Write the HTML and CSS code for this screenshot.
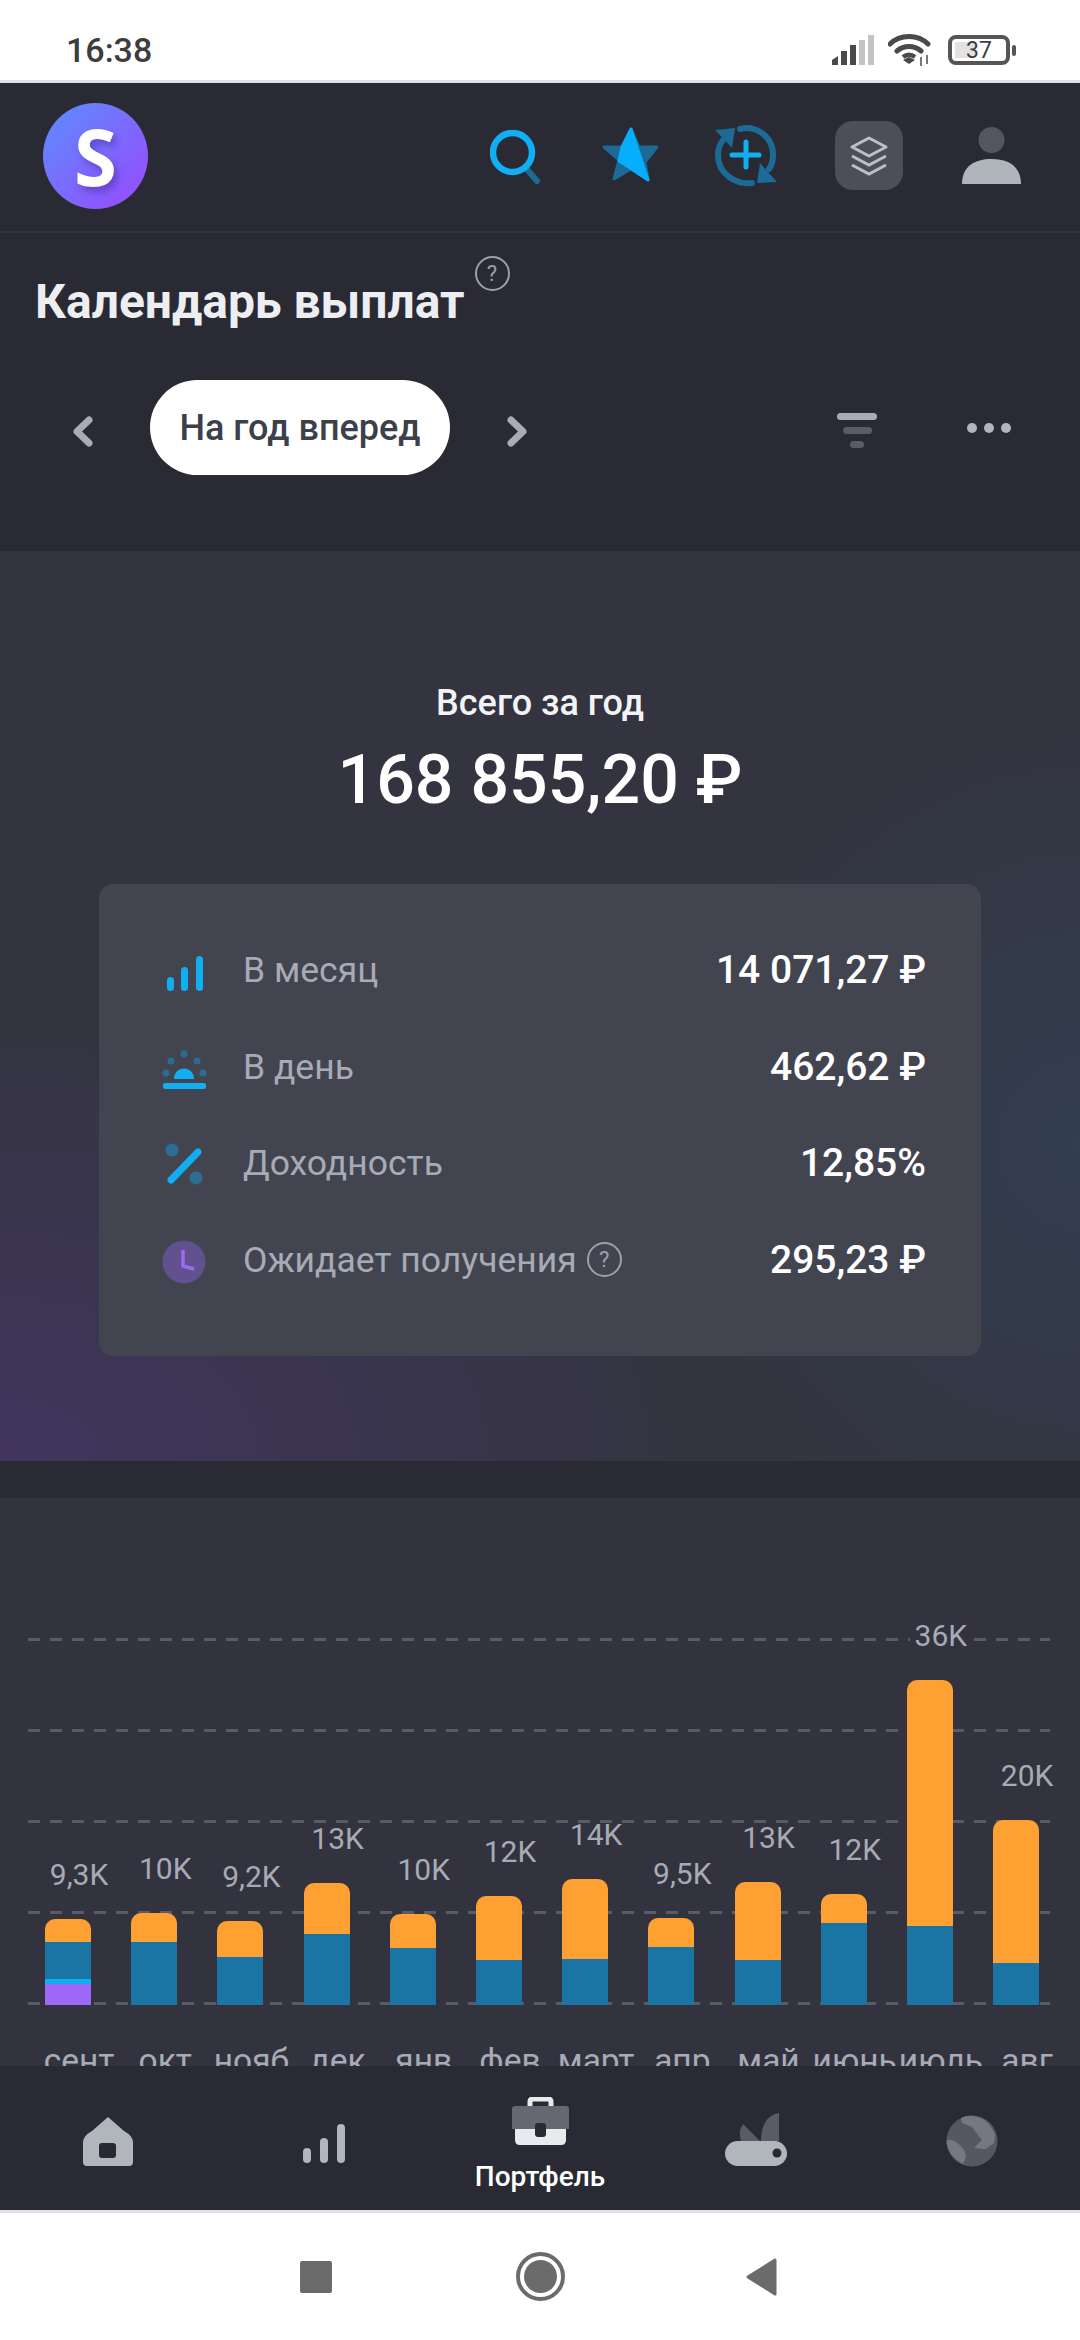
FILE: index.html
```html
<!DOCTYPE html>
<html lang="ru">
<head>
  <meta charset="UTF-8">
  <title>Календарь выплат</title>
  <meta name="viewport" content="width=device-width, initial-scale=1.0">
  <link rel="stylesheet" href="styles.css">
</head>
<body>
  <div class="status-bar">
    <span class="status-time">16:38</span>
    <div class="status-icons">
      <svg width="42" height="30" viewBox="0 0 42 30">
        <path d="M0 30v-5l6-4v9z" fill="#4a4a4a"/>
        <rect x="9" y="16" width="6" height="14" fill="#4a4a4a"/>
        <rect x="18" y="10" width="6" height="20" fill="#4a4a4a"/>
        <rect x="27" y="5" width="6" height="25" fill="#c4c4c4"/>
        <rect x="36" y="0" width="6" height="30" fill="#c4c4c4"/>
      </svg>
      <svg width="44" height="32" viewBox="0 0 44 32">
        <path d="M2 10C12 0 30 0 40 10M9 17c7-6 17-6 24 0" fill="none" stroke="#4a4a4a" stroke-width="5" stroke-linecap="round"/>
        <path d="M15 23c4-3 8-3 12 0" fill="none" stroke="#4a4a4a" stroke-width="4.5"/>
        <path d="M15 26l6-3 6 3-6 4z" fill="#4a4a4a"/>
        <path d="M33 23v9M39 21v9" stroke="#777" stroke-width="2"/>
      </svg>
      <div class="battery">
        <span class="battery-level"></span>
        <span class="battery-text">37</span>
      </div>
      <span class="battery-nub"></span>
    </div>
  </div>

  <header class="top-bar">
    <div class="logo">S</div>
    <div class="top-icons">
      <svg class="icon-search" width="51" height="54" viewBox="0 0 51 54">
        <path d="M35 37l12 14" stroke="#1d6a94" stroke-width="6" stroke-linecap="round"/>
        <circle cx="22.500" cy="22.500" r="19.500" fill="none" stroke="#12aef2" stroke-width="6.500"/>
      </svg>
      <svg class="icon-star" width="57" height="55" viewBox="0 0 57 55">
        <path d="M29 2l8 18h18l-12 15 3 17-17-10-17 10 5-19L2 20h19z" fill="#1c6a96" stroke="#1c6a96" stroke-width="3" stroke-linejoin="round"/>
        <path d="M29 2l17 51-18-12-11-7 3-14z" fill="#07aefc" stroke="#07aefc" stroke-width="3" stroke-linejoin="round"/>
      </svg>
      <svg class="icon-refresh" width="64" height="64" viewBox="0 0 64 64">
        <path d="M26 6c14-4 33 6 33 26 0 5-1 10-4 14M38 60C22 62 4 51 4 32c0-6 2-11 5-15" fill="none" stroke="#1c6a96" stroke-width="6" stroke-linecap="round"/>
        <path d="M1 7l20-2-3 20zM63 59l-20 1 3-20z" fill="#1c6a96"/>
        <path d="M32 19v25M18 32h27" stroke="#12aef2" stroke-width="5" stroke-linecap="round"/>
      </svg>
      <div class="layers-btn">
        <svg width="68" height="69" viewBox="0 0 68 69">
          <path d="M34 17l17 9-17 9-17-9z" fill="none" stroke="#bcbfc8" stroke-width="3" stroke-linejoin="round"/>
          <path d="M17 35l17 9 17-9M17 44l17 9 17-9" fill="none" stroke="#bcbfc8" stroke-width="3"/>
        </svg>
      </div>
      <svg class="icon-person" width="59" height="57" viewBox="0 0 59 57">
        <ellipse cx="29.500" cy="13" rx="13" ry="13" fill="#55565f"/>
        <path d="M0 57c0-18 13-25 29.500-25S59 39 59 57z" fill="#b0b5bc"/>
      </svg>
    </div>
  </header>

  <section class="title-area">
    <div class="title-row">
      <h1>Календарь выплат</h1>
      <span class="help help-big">?</span>
    </div>
    <div class="period-row">
      <svg class="chevron" width="21" height="31" viewBox="0 0 21 31">
        <path d="M17 4L5 15.500 17 27" fill="none" stroke="#a8adb5" stroke-width="7" stroke-linecap="round" stroke-linejoin="round"/>
      </svg>
      <div class="period-pill">На год вперед</div>
      <svg class="chevron" width="21" height="31" viewBox="0 0 21 31">
        <path d="M4 4l12 11.500L4 27" fill="none" stroke="#a8adb5" stroke-width="7" stroke-linecap="round" stroke-linejoin="round"/>
      </svg>
      <div class="period-actions">
        <div class="filter-icon">
          <span class="filter-a"></span>
          <span class="filter-b"></span>
          <span class="filter-c"></span>
        </div>
        <div class="dots-icon">
          <span></span><span></span><span></span>
        </div>
      </div>
    </div>
  </section>

  <section class="summary">
    <div class="summary-caption">Всего за год</div>
    <div class="summary-total">168 855,20 ₽</div>
    <div class="summary-card">
      <div class="summary-row">
        <svg class="row-icon" width="48" height="48" viewBox="0 0 48 48">
          <rect x="5" y="31" width="7" height="14" rx="3.500" fill="#12aef2"/>
          <rect x="19" y="21" width="7" height="24" rx="3.500" fill="#12aef2"/>
          <rect x="34" y="10" width="7" height="35" rx="3.500" fill="#12aef2"/>
        </svg>
        <span class="row-label">В месяц</span>
        <span class="row-value">14 071,27 ₽</span>
      </div>
      <div class="summary-row">
        <svg class="row-icon" width="48" height="48" viewBox="0 0 48 48">
          <circle cx="22" cy="11" r="3.500" fill="#2a6c93"/>
          <circle cx="9" cy="18" r="3.500" fill="#2a6c93"/>
          <circle cx="35" cy="18" r="3.500" fill="#2a6c93"/>
          <circle cx="4" cy="30" r="3.500" fill="#2a6c93"/>
          <circle cx="41" cy="30" r="3.500" fill="#2a6c93"/>
          <path d="M12 36c0-14 20-14 20 0z" fill="#12aef2"/>
          <rect x="1" y="40" width="43" height="6" rx="2" fill="#12aef2"/>
        </svg>
        <span class="row-label">В день</span>
        <span class="row-value">462,62 ₽</span>
      </div>
      <div class="summary-row">
        <svg class="row-icon" width="48" height="48" viewBox="0 0 48 48">
          <circle cx="10" cy="11" r="6.500" fill="#2e6e95"/>
          <circle cx="34" cy="39" r="6.500" fill="#2e6e95"/>
          <path d="M36 13L9 41" stroke="#12aef2" stroke-width="7" stroke-linecap="round"/>
        </svg>
        <span class="row-label">Доходность</span>
        <span class="row-value">12,85%</span>
      </div>
      <div class="summary-row">
        <svg class="row-icon" width="48" height="48" viewBox="0 0 48 48">
          <circle cx="22" cy="26" r="21.500" fill="#63518f"/>
          <path d="M21 14v16l11 3" fill="none" stroke="#9a6df0" stroke-width="3.500" stroke-linejoin="round"/>
        </svg>
        <span class="row-label">Ожидает получения</span>
        <span class="help help-small">?</span>
        <span class="row-value">295,23 ₽</span>
      </div>
    </div>
  </section>

  <section class="chart">
    <div class="plot">
      <div class="grid-lines">
        <i></i><i></i><i></i><i></i><i></i>
      </div>
      <div class="bars">
        <div class="bar-col">
          <span class="bar-label">9,3K</span>
          <div class="bar">
            <div class="seg-orange" style="height:23px"></div>
            <div class="seg-blue" style="height:37px"></div>
            <div class="seg-cyan" style="height:5px"></div>
            <div class="seg-purple" style="height:21px"></div>
          </div>
        </div>
        <div class="bar-col">
          <span class="bar-label">10K</span>
          <div class="bar">
            <div class="seg-orange" style="height:29px"></div>
            <div class="seg-blue" style="height:63px"></div>
          </div>
        </div>
        <div class="bar-col">
          <span class="bar-label">9,2K</span>
          <div class="bar">
            <div class="seg-orange" style="height:36px"></div>
            <div class="seg-blue" style="height:48px"></div>
          </div>
        </div>
        <div class="bar-col">
          <span class="bar-label">13K</span>
          <div class="bar">
            <div class="seg-orange" style="height:51px"></div>
            <div class="seg-blue" style="height:71px"></div>
          </div>
        </div>
        <div class="bar-col">
          <span class="bar-label">10K</span>
          <div class="bar">
            <div class="seg-orange" style="height:34px"></div>
            <div class="seg-blue" style="height:57px"></div>
          </div>
        </div>
        <div class="bar-col">
          <span class="bar-label">12K</span>
          <div class="bar">
            <div class="seg-orange" style="height:64px"></div>
            <div class="seg-blue" style="height:45px"></div>
          </div>
        </div>
        <div class="bar-col">
          <span class="bar-label">14K</span>
          <div class="bar">
            <div class="seg-orange" style="height:80px"></div>
            <div class="seg-blue" style="height:46px"></div>
          </div>
        </div>
        <div class="bar-col">
          <span class="bar-label">9,5K</span>
          <div class="bar">
            <div class="seg-orange" style="height:29px"></div>
            <div class="seg-blue" style="height:58px"></div>
          </div>
        </div>
        <div class="bar-col">
          <span class="bar-label">13K</span>
          <div class="bar">
            <div class="seg-orange" style="height:78px"></div>
            <div class="seg-blue" style="height:45px"></div>
          </div>
        </div>
        <div class="bar-col">
          <span class="bar-label">12K</span>
          <div class="bar">
            <div class="seg-orange" style="height:29px"></div>
            <div class="seg-blue" style="height:82px"></div>
          </div>
        </div>
        <div class="bar-col">
          <span class="bar-label">36K</span>
          <div class="bar">
            <div class="seg-orange" style="height:246px"></div>
            <div class="seg-blue" style="height:79px"></div>
          </div>
        </div>
        <div class="bar-col">
          <span class="bar-label">20K</span>
          <div class="bar">
            <div class="seg-orange" style="height:143px"></div>
            <div class="seg-blue" style="height:42px"></div>
          </div>
        </div>
      </div>
    </div>
    <div class="months">
      <span>сент</span><span>окт</span><span>нояб</span><span>дек</span><span>янв</span><span>фев</span>
      <span>март</span><span>апр</span><span>май</span><span>июнь</span><span>июль</span><span>авг</span>
    </div>
  </section>

  <nav class="bottom-nav">
    <div class="nav-item">
      <svg width="60" height="56" viewBox="0 0 60 56">
        <path d="M30 4L46 18q9 5 9 11v20q0 4-4 4H9q-4 0-4-4V29q0-6 9-11z" fill="#b1b5bc"/>
        <rect x="21" y="30" width="17" height="15" rx="3" fill="#282932"/>
      </svg>
    </div>
    <div class="nav-item">
      <svg width="60" height="56" viewBox="0 0 60 56">
        <rect x="9" y="35" width="8" height="15" rx="4" fill="#b1b5bc"/>
        <rect x="26" y="25" width="8" height="25" rx="4" fill="#b1b5bc"/>
        <rect x="43" y="11" width="8" height="39" rx="4" fill="#b1b5bc"/>
      </svg>
    </div>
    <div class="nav-item nav-item-active">
      <svg width="57" height="48" viewBox="0 0 57 48">
        <path d="M18 10V5q0-3 3-3h15q3 0 3 3v5" fill="none" stroke="#e8eaee" stroke-width="5"/>
        <path d="M3 30h51v13q0 5-5 5H8q-5 0-5-5z" fill="#e8eaee"/>
        <path d="M3 9h51q3 0 3 3v20H0V12q0-3 3-3z" fill="#666770"/>
        <rect x="23" y="26" width="11" height="14" rx="3" fill="#292a33"/>
      </svg>
      <span class="nav-label">Портфель</span>
    </div>
    <div class="nav-item">
      <svg width="62" height="56" viewBox="0 0 62 56">
        <path d="M36 28C36 12 42 2 54 0v28z" fill="#5a5b65"/>
        <path d="M16 28q-3-10 2-17l17 17z" fill="#5a5b65"/>
        <rect x="0" y="28" width="62" height="25" rx="12.500" fill="#b1b5bc"/>
        <circle cx="52" cy="40" r="4.500" fill="#282932"/>
      </svg>
    </div>
    <div class="nav-item">
      <svg width="60" height="56" viewBox="0 0 60 56">
        <circle cx="30" cy="28" r="25.500" fill="#565761"/>
        <path d="M19 5q6-3 12-2 16 2 22 19l-1 8-8 6-12-1 8-8-10-13-10-4zM5 27q5-1 9 2 10 7 10 15l-3 7Q7 44 4.500 30z" fill="#767881"/>
      </svg>
    </div>
  </nav>

  <div class="system-nav">
    <span class="sys-square"></span>
    <span class="sys-circle"><span></span></span>
    <svg width="32" height="38" viewBox="0 0 32 38">
      <path d="M30 2v34L3 19z" fill="#6b6b6b" stroke="#6b6b6b" stroke-width="3" stroke-linejoin="round"/>
    </svg>
  </div>
</body>
</html>
```

FILE: styles.css
```css
* {
  box-sizing: border-box;
  margin: 0;
  padding: 0;
}

body {
  width: 1080px;
  height: 2340px;
  overflow: hidden;
  font-family: 'Roboto', sans-serif;
  background-color: #292a33;
  display: flex;
  flex-direction: column;
}

/* status bar */
.status-bar {
  height: 83px;
  flex-shrink: 0;
  background-color: #fff;
  border-bottom: 3px solid #dfe1e5;
  display: flex;
  align-items: center;
  justify-content: space-between;
  padding: 20px 64px 0 66px;
}

.status-time {
  font-size: 34px;
  font-weight: 500;
  color: #3c3c3c;
}

.status-icons {
  display: flex;
  align-items: center;
  gap: 14px;
}

.battery {
  width: 62px;
  height: 30px;
  margin-left: 2px;
  border: 4px solid #555;
  border-radius: 8px;
  display: flex;
  align-items: center;
  justify-content: center;
  position: relative;
}

.battery-level {
  position: absolute;
  left: 3px;
  top: 3px;
  bottom: 3px;
  width: 20px;
  background-color: #e2e2e2;
}

.battery-text {
  font-size: 23px;
  color: #3c3c3c;
  position: relative;
}

.battery-nub {
  width: 4px;
  height: 11px;
  margin-left: -12px;
  border-radius: 2px;
  background-color: #555;
}

/* top bar */
.top-bar {
  height: 150px;
  flex-shrink: 0;
  border-bottom: 2px solid #32333e;
  padding: 20px 59px 0 43px;
  display: flex;
  justify-content: space-between;
  align-items: flex-start;
}

.logo {
  width: 105px;
  height: 106px;
  border-radius: 50%;
  background: linear-gradient(135deg, #5b8eff, #9a48fb);
  color: #fff;
  font-family: 'Open Sans', sans-serif;
  font-size: 78px;
  font-weight: 700;
  text-align: center;
  line-height: 106px;
  text-shadow: 4px 5px 7px rgba(50, 20, 120, 0.35);
}

.top-icons {
  display: flex;
  align-items: flex-start;
  margin-top: 18px;
}

.icon-search {
  margin-top: 9px;
}

.icon-star {
  margin: 6px 0 0 61px;
}

.icon-refresh {
  margin: 2px 0 0 55px;
}

.layers-btn {
  width: 68px;
  height: 69px;
  margin-left: 57px;
  border-radius: 18px;
  background-color: #4c4e5a;
}

.icon-person {
  margin: 6px 0 0 59px;
}

/* title and period */
.title-area {
  height: 318px;
  flex-shrink: 0;
  padding-top: 23px;
}

.title-row {
  display: flex;
  align-items: flex-start;
  padding-left: 35px;
}

.title-row h1 {
  margin-top: 16px;
  font-size: 48px;
  line-height: 60px;
  font-weight: 700;
  color: #eceef2;
}

.help {
  border: 2px solid #9da1aa;
  border-radius: 50%;
  display: flex;
  align-items: center;
  justify-content: center;
  color: #9da1aa;
  flex-shrink: 0;
}

.help-big {
  width: 35px;
  height: 35px;
  margin-left: 10px;
  font-size: 22px;
}

.help-small {
  width: 35px;
  height: 35px;
  margin-left: 10px;
  font-size: 22px;
}

.period-row {
  margin-top: 48px;
  padding: 0 69px 0 72px;
  display: flex;
  align-items: center;
}

.chevron {
  margin-top: 7px;
}

.period-pill {
  width: 300px;
  height: 95px;
  margin: 0 57px;
  border-radius: 48px;
  background-color: #fff;
  color: #3d3f4a;
  font-size: 36px;
  font-weight: 500;
  display: flex;
  align-items: center;
  justify-content: center;
}

.period-actions {
  margin-left: auto;
  display: flex;
  align-items: center;
  gap: 90px;
}

.filter-icon {
  width: 40px;
  display: flex;
  flex-direction: column;
  align-items: center;
  gap: 7px;
  margin-top: 5px;
}

.filter-icon span {
  display: block;
  height: 7px;
  border-radius: 4px;
}

.filter-a {
  width: 40px;
  background-color: #a8adb5;
}

.filter-b {
  width: 29px;
  background-color: #5a5c66;
}

.filter-c {
  width: 14px;
  background-color: #5a5c66;
}

.dots-icon {
  width: 44px;
  display: flex;
  justify-content: space-between;
}

.dots-icon span {
  width: 10px;
  height: 10px;
  border-radius: 50%;
  background-color: #b1b5bc;
}

/* summary */
.summary {
  height: 910px;
  flex-shrink: 0;
  padding: 130px 99px 0;
  background-color: #33343f;
  background-image:
    radial-gradient(ellipse 720px 460px at 0% 100%, rgba(80, 55, 125, 0.5), transparent),
    radial-gradient(ellipse 430px 460px at 100% 65%, rgba(50, 80, 110, 0.35), transparent);
  text-align: center;
}

.summary-caption {
  font-size: 36px;
  line-height: 44px;
  font-weight: 500;
  color: #f2f3f5;
}

.summary-total {
  margin-top: 11px;
  font-size: 68px;
  line-height: 88px;
  font-weight: 500;
  color: #fff;
}

.summary-card {
  margin-top: 60px;
  height: 472px;
  padding: 38px 55px 0 63px;
  border-radius: 14px;
  background-color: #424450;
  text-align: left;
}

.summary-row {
  height: 96.500px;
  display: flex;
  align-items: center;
}

.row-icon {
  flex-shrink: 0;
  margin-right: 33px;
}

.row-label {
  font-size: 35.500px;
  color: #a7abb6;
}

.row-value {
  margin-left: auto;
  font-size: 39px;
  font-weight: 500;
  color: #fff;
}

/* chart */
.chart {
  height: 568px;
  flex-shrink: 0;
  margin-top: 37px;
  padding-top: 102px;
  background-color: #32333e;
  overflow: hidden;
}

.plot {
  height: 405px;
  position: relative;
}

.grid-lines {
  position: absolute;
  left: 28px;
  width: 1022px;
  bottom: 0;
  height: 367px;
  display: flex;
  flex-direction: column;
  justify-content: space-between;
}

.grid-lines i {
  display: block;
  height: 3px;
  background-image: repeating-linear-gradient(90deg, #595b67 0 12px, transparent 12px 22px);
}

.bars,
.months {
  display: grid;
  grid-template-columns: repeat(12, 46px);
  column-gap: 40.200px;
  padding-left: 45px;
}

.bars {
  height: 100%;
  position: relative;
}

.bar-col {
  display: flex;
  flex-direction: column;
  align-items: center;
  justify-content: flex-end;
}

.bar-label {
  margin: 0 0 32px 22px;
  padding: 0 5px;
  font-size: 30px;
  line-height: 24px;
  color: #a7abb6;
  background-color: #32333e;
  white-space: nowrap;
}

.bar {
  width: 46px;
  border-radius: 10px 10px 0 0;
  overflow: hidden;
}

.seg-orange {
  background-color: #ffa033;
}

.seg-blue {
  background-color: #1a75a5;
}

.seg-cyan {
  background-color: #12aef2;
}

.seg-purple {
  background-color: #9d68f8;
}

.months {
  padding-top: 36px;
  font-size: 33.500px;
  line-height: 40px;
  color: #a7abb6;
}

.months span {
  display: flex;
  justify-content: center;
  margin-left: 22px;
  white-space: nowrap;
}

/* bottom nav */
.bottom-nav {
  height: 144px;
  flex-shrink: 0;
  background-color: #292a33;
  display: grid;
  grid-template-columns: repeat(5, 1fr);
}

.nav-item {
  display: flex;
  flex-direction: column;
  align-items: center;
  padding-top: 47px;
}

.nav-item-active {
  padding-top: 31px;
}

.nav-label {
  margin-top: 15px;
  font-size: 28px;
  line-height: 34px;
  font-weight: 500;
  color: #fff;
}

/* system nav */
.system-nav {
  flex: 1;
  background-color: #fff;
  border-top: 3px solid #dfe1e5;
  display: flex;
  align-items: center;
  padding-left: 300px;
}

.sys-square {
  width: 32px;
  height: 32px;
  border-radius: 2px;
  background-color: #6b6b6b;
}

.sys-circle {
  width: 49px;
  height: 49px;
  margin: 0 180px 0 184px;
  border: 4px solid #6b6b6b;
  border-radius: 50%;
  padding: 4px;
}

.sys-circle span {
  display: block;
  width: 100%;
  height: 100%;
  border-radius: 50%;
  background-color: #6b6b6b;
}
```
